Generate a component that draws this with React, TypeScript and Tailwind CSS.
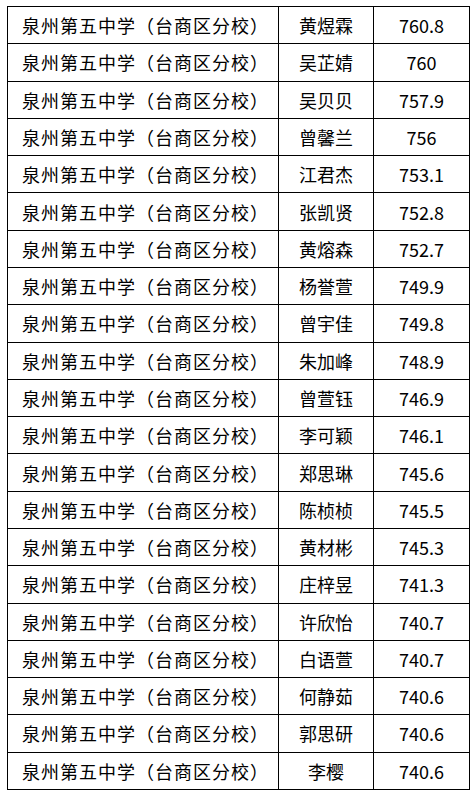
const rows: [string, string][] = [
  ['黄煜霖', '760.8'],
  ['吴芷婧', '760'],
  ['吴贝贝', '757.9'],
  ['曾馨兰', '756'],
  ['江君杰', '753.1'],
  ['张凯贤', '752.8'],
  ['黄熔森', '752.7'],
  ['杨誉萱', '749.9'],
  ['曾宇佳', '749.8'],
  ['朱加峰', '748.9'],
  ['曾萱钰', '746.9'],
  ['李可颖', '746.1'],
  ['郑思琳', '745.6'],
  ['陈桢桢', '745.5'],
  ['黄材彬', '745.3'],
  ['庄梓昱', '741.3'],
  ['许欣怡', '740.7'],
  ['白语萱', '740.7'],
  ['何静茹', '740.6'],
  ['郭思研', '740.6'],
  ['李樱', '740.6'],
];

export default function App() {
  return (
    <div className="w-[476px] h-[795px] bg-white pt-[6px] pl-[7px]">
      <table
        className="border-collapse w-[462px] text-[18px] text-black table-fixed"
        style={{ fontFamily: '"Microsoft YaHei", "Noto Sans CJK SC", sans-serif' }}
      >
        <colgroup>
          <col className="w-[271px]" />
          <col className="w-[95px]" />
          <col className="w-[96px]" />
        </colgroup>
        <tbody>
          {rows.map(([name, score], i) => (
            <tr key={i} className="h-[37.29px]">
              <td className="border border-black pl-[14px] p-0 leading-none whitespace-nowrap tracking-[1px]">
                泉州第五中学（台商区分校）
              </td>
              <td className="border border-black p-0 text-center leading-none">{name}</td>
              <td className="border border-black p-0 text-center leading-none">{score}</td>
            </tr>
          ))}
        </tbody>
      </table>
    </div>
  );
}
